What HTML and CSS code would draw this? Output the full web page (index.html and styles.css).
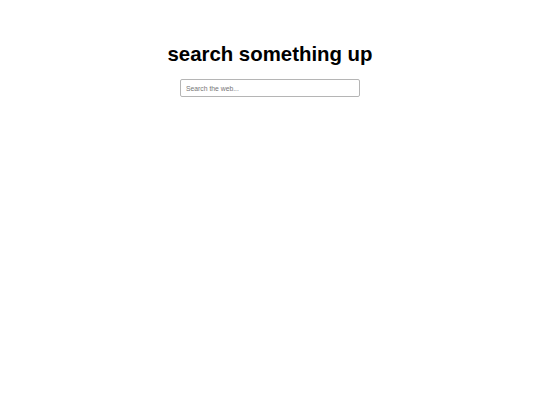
FILE: index.html
```html
<!DOCTYPE html>
<html>
<head>
<meta charset="utf-8">
<link rel="stylesheet" href="styles.css">
</head>
<body>
<main class="page">
  <h1 class="title">search something up</h1>
  <input class="search" type="text" placeholder="Search the web...">
</main>
</body>
</html>
```
FILE: styles.css
```css
html, body {
  margin: 0;
  padding: 0;
  background: #ffffff;
}
.page {
  display: flex;
  flex-direction: column;
  align-items: center;
  padding-top: 42px;
  font-family: "Liberation Sans", Arial, sans-serif;
}
.title {
  margin: 0;
  font-size: 20.4px;
  line-height: 24px;
  font-weight: bold;
  color: #000;
}
.search {
  margin-top: 13px;
  box-sizing: border-box;
  width: 180px;
  height: 18px;
  padding: 0 5px;
  border: 1px solid #b5b5b5;
  border-radius: 2px;
  font-family: "Liberation Sans", Arial, sans-serif;
  font-size: 6.8px;
  color: #333;
  outline: none;
}
.search::placeholder {
  color: #777;
}
```
